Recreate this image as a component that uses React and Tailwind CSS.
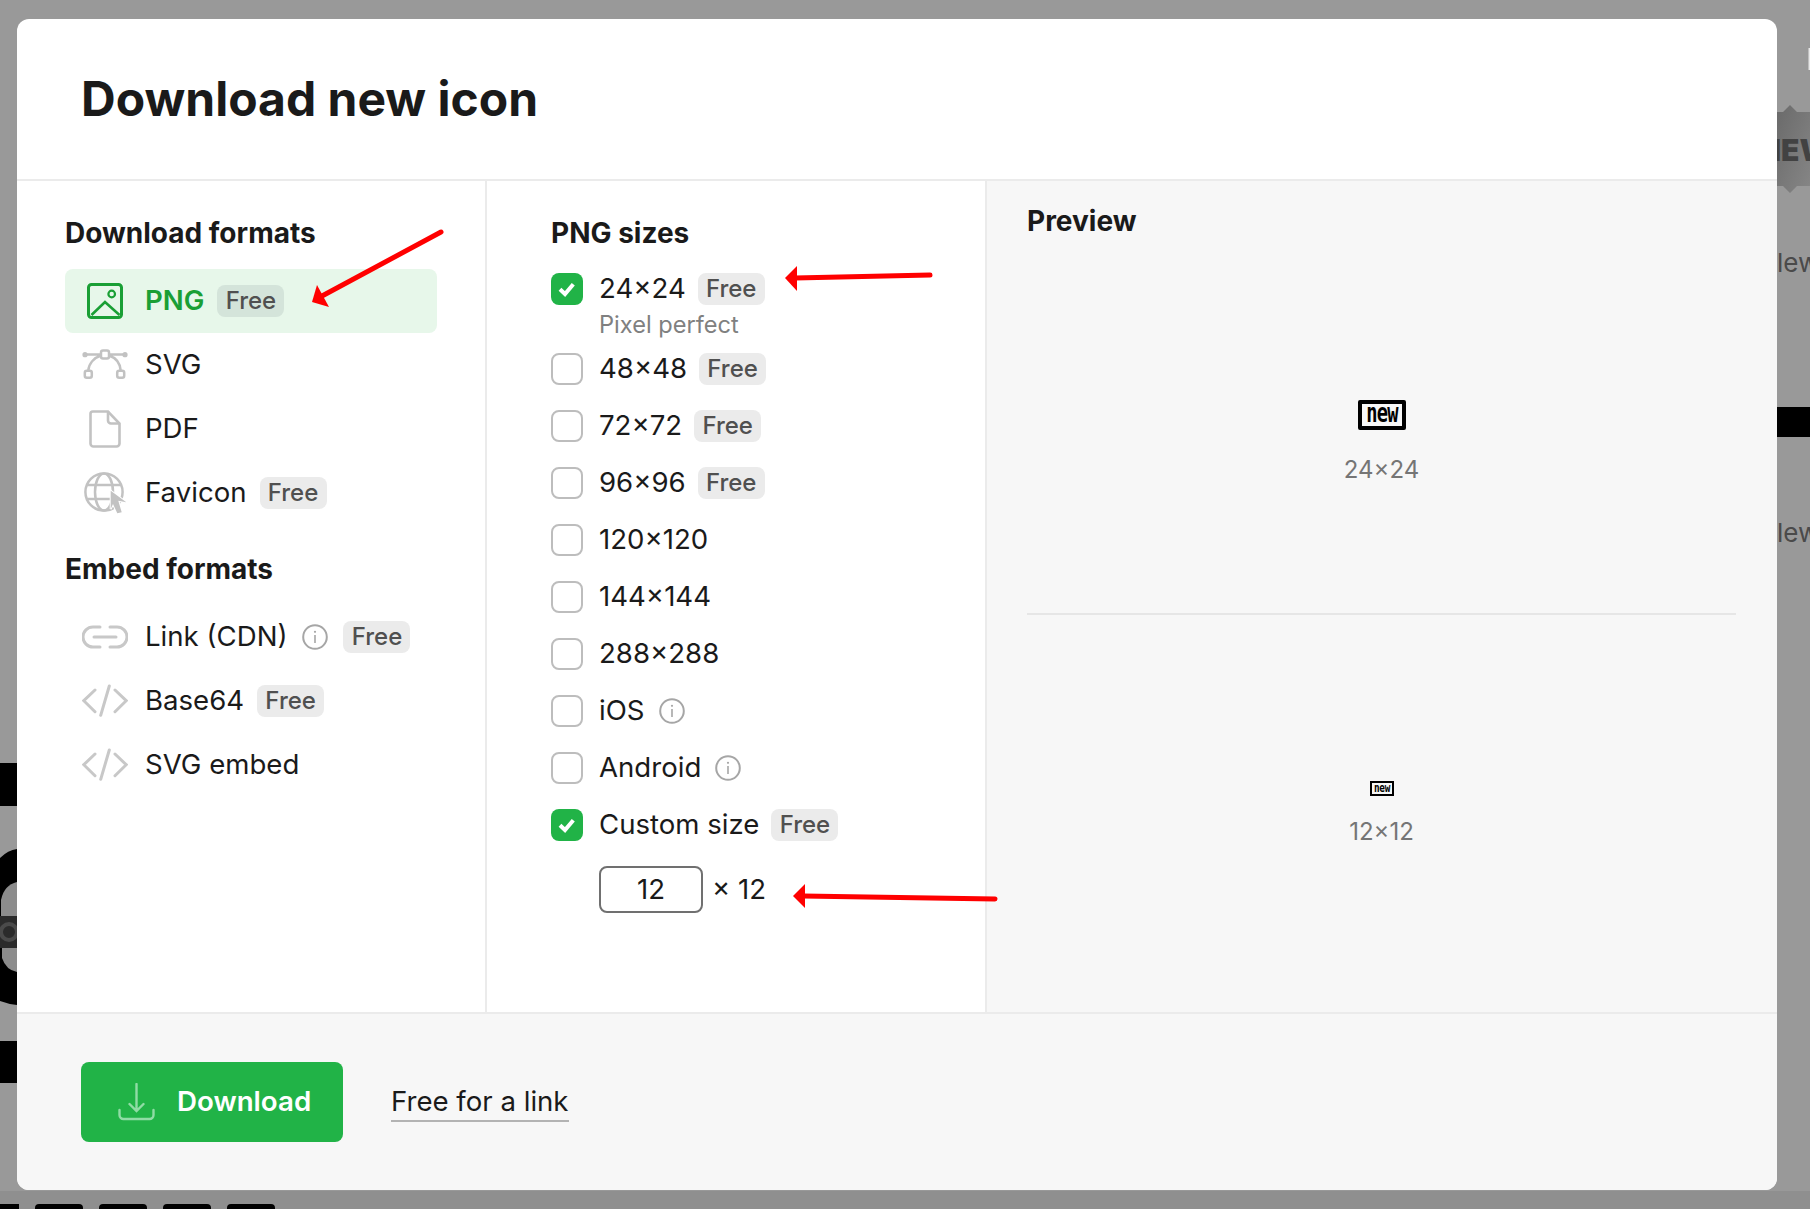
// Download dialog over the dimmed icon page.
import React from 'react';

const GREY = '#c2c2c2';

function ImageIcon() {
  return (
    <svg width="36" height="36" viewBox="0 0 36 36" fill="none" stroke="#1a9f35" strokeWidth="3">
      <rect x="1.5" y="1.5" width="33" height="33" rx="3" />
      <path d="M4.5 32 18 19 32.5 32" strokeWidth="2.6" />
      <circle cx="24.7" cy="11" r="3.3" strokeWidth="2.2" />
    </svg>
  );
}

function VectorIcon() {
  return (
    <svg width="50" height="32" viewBox="0 0 50 32" fill="none" stroke={GREY} strokeWidth="2.5">
      <path d="M5 5.5H21M29 5.5H45M8.3 21.5C9 13.5 15 8.5 21 6.5M40.7 21.5C40 13.5 35 8.5 29 6.5" />
      <circle cx="5" cy="5.7" r="2.6" fill={GREY} stroke="none" />
      <circle cx="45" cy="5.7" r="2.6" fill={GREY} stroke="none" />
      <rect x="21" y="1.5" width="8" height="8" rx="2" />
      <rect x="4.8" y="21.8" width="7" height="7" rx="2" />
      <rect x="37.2" y="21.8" width="7" height="7" rx="2" />
    </svg>
  );
}

function FileIcon() {
  return (
    <svg width="32" height="38" viewBox="0 0 32 38" fill="none" stroke={GREY} strokeWidth="2.6">
      <path d="M3.8 1.5H19L30.5 13.5V33.5A3 3 0 0 1 27.5 36.5H4.5A3 3 0 0 1 1.5 33.5V3.8A2.3 2.3 0 0 1 3.8 1.5Z" />
      <path d="M19 1.5V10.5A3 3 0 0 0 22 13.5H30.5" />
    </svg>
  );
}

function GlobeIcon() {
  return (
    <svg width="46" height="46" viewBox="0 0 46 46" fill="none" stroke={GREY} strokeWidth="2.5">
      <circle cx="22" cy="22" r="18.6" />
      <ellipse cx="22" cy="22" rx="9" ry="18.6" />
      <path d="M5 15H39M5 29H39" />
      <path
        d="M28.7 20.7 44.3 32.3 36.3 30.7 39.7 42.3 35.3 43.3 31 34 28.7 39Z"
        fill={GREY}
        stroke="#fff"
        strokeWidth="2"
        paintOrder="stroke"
      />
    </svg>
  );
}

function LinkIcon() {
  return (
    <svg width="46" height="24" viewBox="0 0 46 24" fill="none" stroke="#c8c8c8" strokeWidth="3" strokeLinecap="round">
      <path d="M18 2H11A10 10 0 0 0 11 22H18M28 2H35A10 10 0 0 1 35 22H28M12 12H34" />
    </svg>
  );
}

function CodeIcon() {
  return (
    <svg width="46" height="34" viewBox="0 0 46 34" fill="none" stroke="#c8c8c8" strokeWidth="3" strokeLinecap="round">
      <path d="M13 6 1.8 16.7 13 27.7M33 6 44.2 16.7 33 27.7M27.3 2 18.7 31.3" />
    </svg>
  );
}

function InfoIcon() {
  return (
    <svg width="26" height="26" viewBox="0 0 26 26" fill="none" stroke="#a6a6a6" strokeWidth="2">
      <circle cx="13" cy="13" r="11.8" />
      <path d="M13 11V19" strokeWidth="1.6" />
      <circle cx="13" cy="7.8" r="1.1" fill="#a6a6a6" stroke="none" />
    </svg>
  );
}

function DownloadIcon() {
  return (
    <svg width="37" height="38" viewBox="0 0 37 38" fill="none" stroke="#90dca5" strokeWidth="2.4" strokeLinecap="round">
      <path d="M18.5 1V27.5M11.5 21 18.5 28 25.5 21M1.5 27V32A4 4 0 0 0 5.5 36H31.5A4 4 0 0 0 35.5 32V27" />
    </svg>
  );
}

function Free({ green }) {
  return (
    <span
      className={[
        'inline-flex items-center justify-center w-[67px] h-[32px] rounded-lg text-[24px] font-medium text-[#505050]',
        green ? 'bg-[#d4e4da]' : 'bg-[#ebebeb]',
      ].join(' ')}
    >
      Free
    </span>
  );
}

function Box({ checked }) {
  if (checked) {
    return (
      <span className="w-[32px] h-[32px] shrink-0 rounded-lg bg-[#21b347] flex items-center justify-center">
        <svg width="32" height="32" viewBox="0 0 32 32" fill="none" stroke="#fff" strokeWidth="4">
          <path d="M9 16.3 14 21 22.3 11.3" />
        </svg>
      </span>
    );
  }
  return <span className="w-[32px] h-[32px] shrink-0 rounded-lg border-2 border-[#bdbdbd] bg-white" />;
}

function FormatRow({ icon, label, free, info, active }) {
  return (
    <div className={['flex items-center h-[64px] w-[372px] rounded-lg', active ? 'bg-[#e7f7ea]' : ''].join(' ')}>
      <span className="w-[80px] shrink-0 flex justify-center">{icon}</span>
      <span className={active ? 'text-[#1a9f35] font-semibold' : ''}>{label}</span>
      {info && (
        <span className="ml-[15px] flex">
          <InfoIcon />
        </span>
      )}
      {free && (
        <span className={info ? 'ml-[15px] flex' : 'ml-[13px] flex'}>
          <Free green={active} />
        </span>
      )}
    </div>
  );
}

function SizeRow({ label, checked, free, info }) {
  return (
    <div className="flex items-center h-[32px] gap-[16px]">
      <Box checked={checked} />
      <span className="flex items-center">
        {label}
        {free && (
          <span className="ml-[12px] flex">
            <Free />
          </span>
        )}
        {info && (
          <span className="ml-[14px] flex">
            <InfoIcon />
          </span>
        )}
      </span>
    </div>
  );
}

const SIZES = [
  { label: '48×48', free: true },
  { label: '72×72', free: true },
  { label: '96×96', free: true },
  { label: '120×120' },
  { label: '144×144' },
  { label: '288×288' },
  { label: 'iOS', info: true },
  { label: 'Android', info: true },
  { label: 'Custom size', free: true, checked: true },
];

function Backdrop() {
  return (
    <div className="absolute inset-0 overflow-hidden bg-[#999999]">
      <div className="absolute left-0 top-[1191px] w-[1810px] h-[18px] bg-[#8f8f8f]" />
      {/* what shows of the page behind, left and right of the dialog */}
      <svg className="absolute left-0 top-0" width="1810" height="1209">
        <defs>
          <linearGradient id="badge" x1="0" y1="0" x2="1" y2="1">
            <stop offset="0" stopColor="#6a6a6a" />
            <stop offset="1" stopColor="#868686" />
          </linearGradient>
        </defs>
        <rect x="0" y="763" width="17" height="43" fill="#000" />
        <path d="M0 858Q8 850 17 849V1005Q8 1004 0 1001Z" fill="#000" />
        <path d="M1 900Q4 885 17 882V916H1Z" fill="#8c8c8c" />
        <rect x="0" y="916" width="17" height="32" fill="#2b2b2b" />
        <circle cx="9" cy="932" r="8" fill="none" stroke="#4a4a4a" strokeWidth="4" />
        <path d="M2 948H17V972Q6 970 2 958Z" fill="#8c8c8c" />
        <rect x="0" y="1041" width="17" height="42" fill="#000" />
        <path d="M1777 112 1783 112 1790 105 1797 112H1810V186H1797L1790 193 1783 186H1777Z" fill="url(#badge)" />
        <rect x="1777" y="407" width="33" height="30" fill="#000" />
        <rect x="1808.5" y="48" width="1.5" height="22" fill="#e8e8e8" />
      </svg>
      <div className="absolute left-[1758px] top-[128px] text-[30px] font-black text-[#424242]">NEW</div>
      <div className="absolute left-[1777px] top-[243px] text-[26px] text-[#4a4a4a]">lew</div>
      <div className="absolute left-[1777px] top-[513px] text-[26px] text-[#4a4a4a]">lew</div>
      {/* bottom strip */}
      <div className="absolute left-0 top-[1204px] w-[1810px] h-[5px] flex gap-[16px]">
        <div className="w-[19px] bg-black" />
        <div className="w-[48px] bg-black rounded-t-sm" />
        <div className="w-[48px] bg-black rounded-t-sm" />
        <div className="w-[48px] bg-black rounded-t-sm" />
        <div className="w-[48px] bg-black rounded-t-sm" />
      </div>
    </div>
  );
}

function Arrows() {
  return (
    <svg className="absolute left-0 top-0 pointer-events-none" width="1810" height="1209" fill="none">
      <path d="M441 232 322 296" stroke="#ff0000" strokeWidth="5" strokeLinecap="round" />
      <path d="M312 302 317 285 329 307Z" fill="#ff0000" />
      <path d="M930 275 795 278" stroke="#ff0000" strokeWidth="5" strokeLinecap="round" />
      <path d="M785 278 797 266 797 291Z" fill="#ff0000" />
      <path d="M995 899 803 896" stroke="#ff0000" strokeWidth="5" strokeLinecap="round" />
      <path d="M793 896 805 884 805 908Z" fill="#ff0000" />
    </svg>
  );
}

export default function App() {
  return (
    <div className="relative w-[1810px] h-[1209px] overflow-hidden pl-[17px] pt-[19px] font-['Inter',sans-serif] text-[27.6px] text-[#1a1a1a]">
      <Backdrop />
      <div className="relative w-[1760px] h-[1171px] rounded-xl overflow-hidden bg-white flex flex-col">
        <div className="h-[162px] shrink-0 border-b-2 border-[#ebebeb] pl-[64px] pt-[50px]">
          <h1 className="text-[48px] leading-[60px] font-bold">Download new icon</h1>
        </div>

        <div className="flex-1 flex min-h-0">
          <div className="w-[470px] shrink-0 border-r-2 border-[#ebebeb] pl-[48px] pt-[36px]">
            <h2 className="text-[28px] leading-[32px] font-bold mb-[20px]">Download formats</h2>
            <FormatRow icon={<ImageIcon />} label="PNG" free active />
            <FormatRow icon={<VectorIcon />} label="SVG" />
            <FormatRow icon={<FileIcon />} label="PDF" />
            <FormatRow icon={<GlobeIcon />} label="Favicon" free />
            <h2 className="text-[28px] leading-[32px] font-bold mt-[28px] mb-[20px]">Embed formats</h2>
            <FormatRow icon={<LinkIcon />} label="Link (CDN)" info free />
            <FormatRow icon={<CodeIcon />} label="Base64" free />
            <FormatRow icon={<CodeIcon />} label="SVG embed" />
          </div>

          <div className="w-[500px] shrink-0 border-r-2 border-[#ebebeb] pl-[64px] pt-[36px]">
            <h2 className="text-[28px] leading-[32px] font-bold mb-[24px]">PNG sizes</h2>
            <SizeRow label="24×24" checked free />
            <div className="pl-[48px] h-[48px] pt-[4px] text-[23.6px] leading-[32px] text-[#808080]">Pixel perfect</div>
            <div className="flex flex-col gap-[25px]">
              {SIZES.map((s) => (
                <SizeRow key={s.label} {...s} />
              ))}
            </div>
            <div className="flex items-center gap-[9px] ml-[48px] mt-[25px]">
              <div className="w-[104px] h-[47px] rounded-lg border-2 border-[#707070] flex items-center justify-center">
                12
              </div>
              <span>× 12</span>
            </div>
          </div>

          <div className="flex-1 bg-[#f7f7f7] pl-[40px] pr-[41px] pt-[24px] flex flex-col">
            <h2 className="text-[28px] leading-[32px] font-bold">Preview</h2>
            <div className="h-[378px] shrink-0 flex flex-col items-center border-b-2 border-[#e6e6e6]">
              <div className="mt-[163px] w-[48px] h-[30px] rounded-[2px] border-[4px] border-black flex items-center justify-center font-['DejaVu_Sans_Mono',monospace] font-bold text-[26px] leading-none text-black">
                <span className="-mt-[5px] scale-x-[0.72] tracking-[-1px]">new</span>
              </div>
              <div className="mt-[25px] text-[24px] leading-[30px] text-[#757575]">24×24</div>
            </div>
            <div className="flex flex-col items-center">
              <div className="mt-[166px] w-[24px] h-[15px] border-[2px] border-black flex items-center justify-center font-['DejaVu_Sans_Mono',monospace] font-bold text-[13px] leading-none text-black">
                <span className="-mt-[3px] scale-x-[0.72] tracking-[-0.5px]">new</span>
              </div>
              <div className="mt-[21px] text-[24px] leading-[30px] text-[#757575]">12×12</div>
            </div>
          </div>
        </div>

        <div className="h-[178px] shrink-0 border-t-2 border-[#ebebeb] bg-[#f7f7f7] flex items-center pl-[64px]">
          <button className="w-[262px] h-[80px] rounded-lg bg-[#21b347] flex items-center pl-[37px] gap-[22px] text-white font-semibold text-[27.7px]">
            <DownloadIcon />
            Download
          </button>
          <span className="ml-[48px] border-b-2 border-[#b3b3b3] leading-[38px]">Free for a link</span>
        </div>
      </div>
      <Arrows />
    </div>
  );
}
